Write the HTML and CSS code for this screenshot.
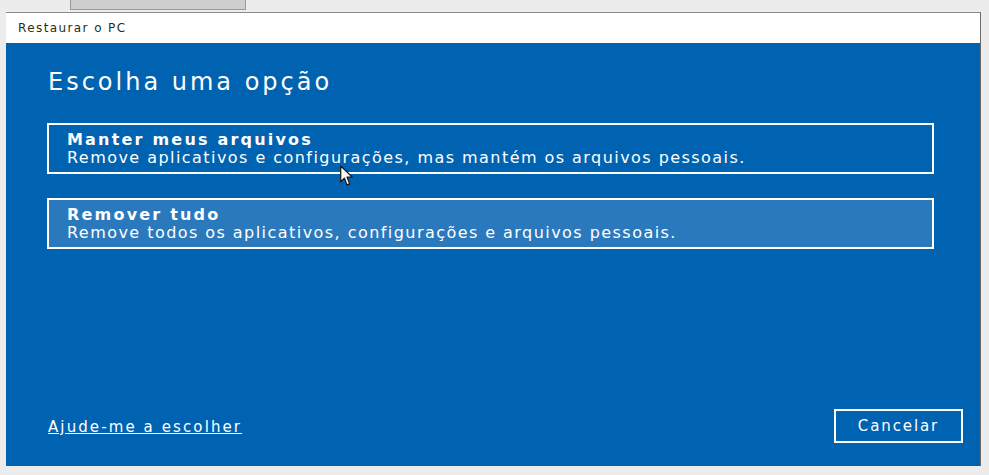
FILE: index.html
```html
<!DOCTYPE html>
<html lang="pt-BR">
<head>
    <meta charset="UTF-8">
    <title>Restaurar o PC</title>
    <link rel="stylesheet" href="styles.css">
</head>
<body>
    <div class="topbar">
        <div class="tab"></div>
    </div>
    <div class="window">
        <div class="titlebar">Restaurar o PC</div>
        <div class="content">
            <h1>Escolha uma opção</h1>
            <div class="options">
                <button class="option">
                    <span class="option-title">Manter meus arquivos</span>
                    <span class="option-desc">Remove aplicativos e configurações, mas mantém os arquivos pessoais.</span>
                </button>
                <button class="option hover">
                    <span class="option-title">Remover tudo</span>
                    <span class="option-desc">Remove todos os aplicativos, configurações e arquivos pessoais.</span>
                </button>
            </div>
            <div class="footer">
                <a href="#" class="help">Ajude-me a escolher</a>
                <button class="cancel">Cancelar</button>
            </div>
        </div>
    </div>
    <!-- mouse pointer -->
    <svg class="cursor" width="16" height="22" viewBox="0 0 14 21">
        <path d="M1 1 L1 16 L4.5 12.5 L7 19 L9.5 18 L7 11.5 L12 11.5 Z" fill="#fff" stroke="#1a1a1a" stroke-width="1.2" stroke-linejoin="round"/>
    </svg>
</body>
</html>
```

FILE: styles.css
```css
* {
    margin: 0;
    padding: 0;
    box-sizing: border-box;
}
body {
    font-family: 'DejaVu Sans', 'Open Sans', sans-serif;
    background: #ececec;
    width: 989px;
    height: 475px;
    overflow: hidden;
    position: relative;
}
.topbar {
    height: 12px;
    padding-left: 70px;
}
.tab {
    width: 176px;
    height: 10px;
    background: #cfcfcf;
    border: 1px solid #9a9a9a;
    border-top: none;
}
.window {
    margin-left: 6px;
    width: 975px;
    border-top: 1px solid #8a8a8a;
    border-right: 1px solid #6a6a6a;
}
.titlebar {
    height: 30px;
    background: #fff;
    padding-left: 12px;
    font-size: 12px;
    letter-spacing: 1.4px;
    line-height: 30px;
    color: #1f2f22;
}
.content {
    background: #0063b1;
    height: 423px;
    padding: 24px 17px 0 41px;
    color: #fff;
    display: flex;
    flex-direction: column;
}
h1 {
    font-weight: 400;
    font-size: 24px;
    line-height: 30px;
    letter-spacing: 3px;
    margin-left: 1px;
}
.options {
    margin-top: 26px;
    margin-right: 29px;
    display: flex;
    flex-direction: column;
    gap: 24px;
}
.option {
    display: flex;
    flex-direction: column;
    align-items: flex-start;
    height: 51px;
    padding: 6px 18px 0;
    background: transparent;
    border: 2px solid #fff;
    color: #fff;
    font-family: inherit;
    text-align: left;
    cursor: pointer;
}
.option.hover {
    background: #2a79bd;
}
.option-title {
    font-weight: 700;
    font-size: 16px;
    line-height: 18px;
    letter-spacing: 2.2px;
}
.option-desc {
    font-size: 16px;
    line-height: 18px;
    letter-spacing: 1.45px;
}
.footer {
    margin-top: auto;
    margin-bottom: 23px;
    display: flex;
    justify-content: space-between;
    align-items: center;
}
.help {
    color: #fff;
    font-size: 15px;
    letter-spacing: 2.1px;
    margin-left: 1px;
    margin-top: 2px;
}
.cancel {
    width: 129px;
    height: 34px;
    background: transparent;
    border: 2px solid #fff;
    color: #fff;
    font-family: inherit;
    font-size: 15px;
    letter-spacing: 1.9px;
    cursor: pointer;
}
.cursor {
    position: absolute;
    left: 339px;
    top: 165px;
}
```
